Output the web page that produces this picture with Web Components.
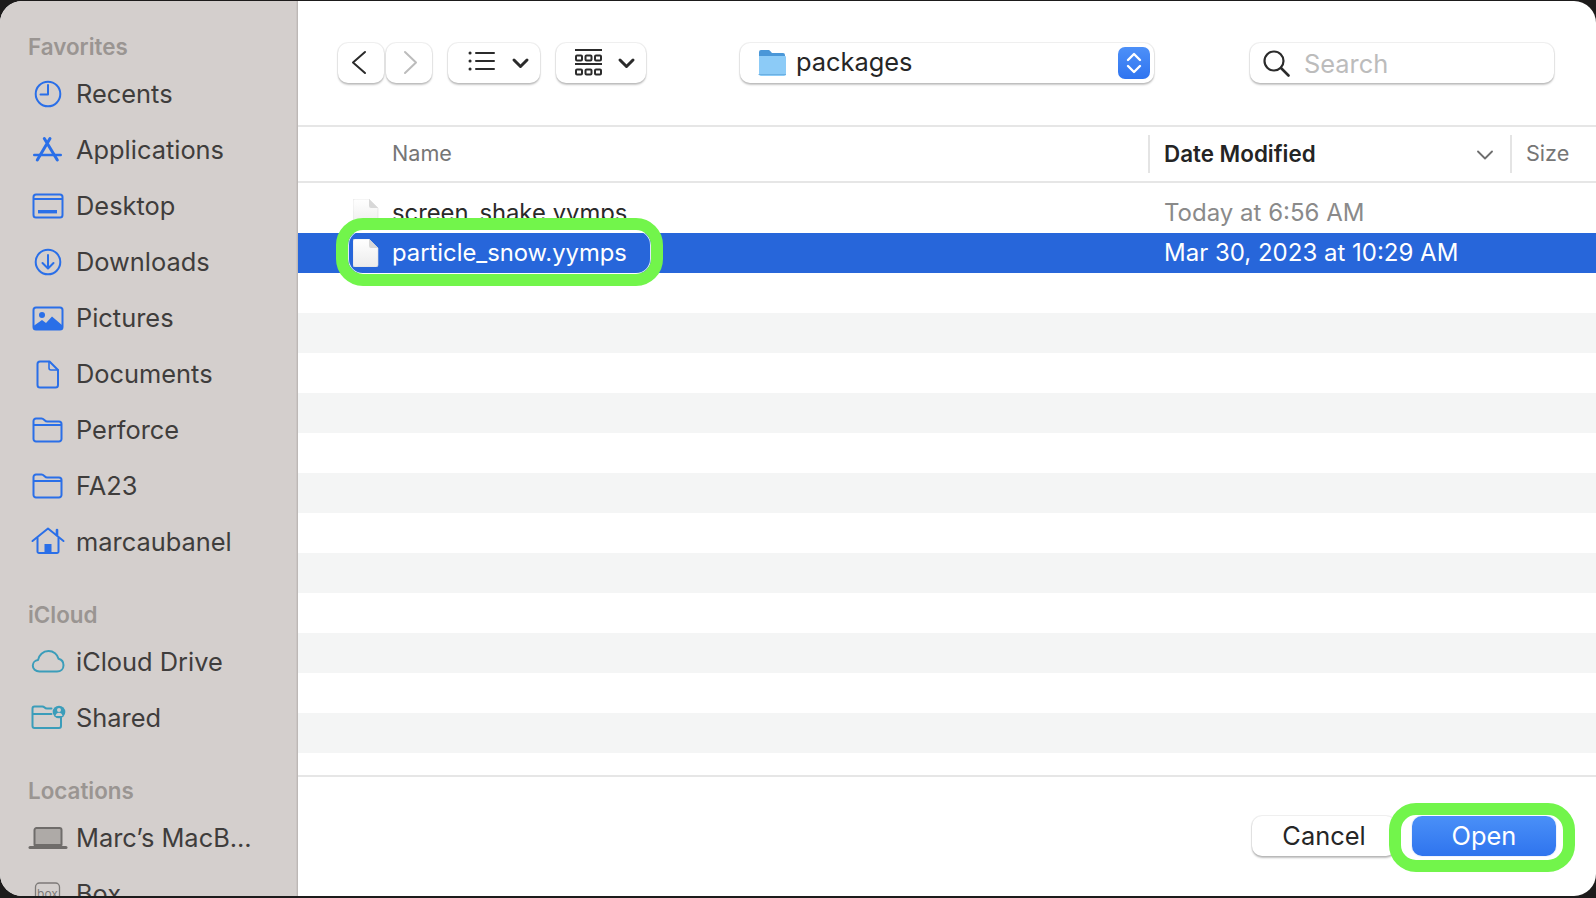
<!DOCTYPE html>
<html lang="en">
<head>
<meta charset="utf-8">
<title>Open</title>
<style>
  html, body { margin: 0; height: 100%; background: #1d1b1b; overflow: hidden; }
  body { font-family: Inter, "Liberation Sans", sans-serif; }
</style>
</head>
<body>
<file-dialog>
  <side-bar slot="side">
    <side-heading>Favorites</side-heading>
    <side-item icon="clock">Recents</side-item>
    <side-item icon="apps">Applications</side-item>
    <side-item icon="desktop">Desktop</side-item>
    <side-item icon="download">Downloads</side-item>
    <side-item icon="pictures">Pictures</side-item>
    <side-item icon="document">Documents</side-item>
    <side-item icon="folder">Perforce</side-item>
    <side-item icon="folder">FA23</side-item>
    <side-item icon="home">marcaubanel</side-item>
    <side-heading class="gap">iCloud</side-heading>
    <side-item icon="cloud">iCloud Drive</side-item>
    <side-item icon="shared">Shared</side-item>
    <side-heading class="gap">Locations</side-heading>
    <side-item icon="laptop">Marc’s MacB...</side-item>
    <side-item icon="box">Box</side-item>
  </side-bar>
  <tool-bar slot="main"></tool-bar>
  <list-header slot="main"></list-header>
  <file-list slot="main">
    <file-row date="Today at 6:56 AM">screen_shake.yymps</file-row>
    <file-row selected date="Mar 30, 2023 at 10:29 AM">particle_snow.yymps</file-row>
  </file-list>
  <dialog-footer slot="main">
    <action-button>Cancel</action-button>
    <action-button primary>Open</action-button>
  </dialog-footer>
  <highlight-ring slot="over" style="left:336px;top:218px;width:327px;height:68px"></highlight-ring>
  <highlight-ring slot="over" style="left:1389px;top:803px;width:186px;height:69px"></highlight-ring>
</file-dialog>

<script>
// sidebar icons, 34x34 box centred on the row
const ICONS = {
  clock: `<circle cx="17" cy="17" r="12.300"/><path d="M17 8v9.500H9.500"/>`,
  apps: `<path stroke-width="3" d="M13.300 5.500 26.300 27M19 5.500 6.300 27"/><path stroke-width="2.600" d="M3.300 22h26.400"/>`,
  desktop: `<rect x="2.500" y="5.500" width="29" height="23" rx="2.500"/><path d="M3 10h28"/><rect x="7" y="21" width="19" height="3.400" fill="currentColor" stroke="none"/>`,
  download: `<circle cx="17" cy="17" r="12.300"/><path d="M17 10v13M11.500 18l5.500 5.500 5.500-5.500"/>`,
  pictures: `<rect x="2.500" y="6.500" width="29" height="22" rx="2.500"/><circle cx="11" cy="14" r="3" fill="currentColor" stroke="none"/><path fill="currentColor" stroke="none" d="M2.500 25 11 19l4 3 6-6.500 10.500 9V26a2.500 2.500 0 0 1-2.500 2.500H5A2.500 2.500 0 0 1 2.500 26z"/>`,
  document: `<path d="M9 4.500h9.500L27 13v15a2.500 2.500 0 0 1-2.500 2.500H9A2.500 2.500 0 0 1 6.500 28V7A2.500 2.500 0 0 1 9 4.500z"/><path d="M18 4.500v6.500a2 2 0 0 0 2 2h7" stroke-width="1.600"/>`,
  folder: `<path d="M5 5.500h5.500c1.500 0 2 .6 3 1.600.8.800 1.300 1.400 2.700 1.400H28A2.500 2.500 0 0 1 30.500 11v15a2.500 2.500 0 0 1-2.500 2.500H5A2.500 2.500 0 0 1 2.500 26V8A2.500 2.500 0 0 1 5 5.500z"/><path d="M3 12h27"/>`,
  home: `<path d="M1.500 16 17 3.500 32.500 16"/><path d="M6.500 13v13.500A1.500 1.500 0 0 0 8 28h18a1.500 1.500 0 0 0 1.500-1.500V13"/><path d="M26 5v5" stroke-width="2.600"/><rect x="13.500" y="19" width="7" height="9" fill="currentColor" stroke="none"/>`,
  cloud: `<path d="M8.500 26.500C4.500 26.500 1.800 24 1.800 20.700c0-3 2.300-5.300 5.200-5.600C7.800 10 12 6 17.500 6c5 0 9 3.300 10 7.800 3 .8 5 3.300 5 6.400 0 3.600-2.700 6.300-6.500 6.300z"/>`,
  shared: `<path d="M20.500 7.500H16c-1.400 0-1.900-.5-2.700-1.300-1-1-1.500-.7-3-.7H3.500a2 2 0 0 0-2 2V25a2 2 0 0 0 2 2H28a2 2 0 0 0 2-2v-8"/><path d="M2 13h18.500"/><circle cx="28" cy="11" r="6.300" fill="currentColor" stroke="none"/><circle cx="28" cy="9" r="2" fill="#d4cfcd" stroke="none"/><path d="M24.500 15c.5-2.200 1.700-3.200 3.500-3.200s3 1 3.500 3.200z" fill="#d4cfcd" stroke="none"/>`,
  laptop: `<path d="M3.500 24V9a2 2 0 0 1 2-2h23a2 2 0 0 1 2 2v15z" fill="#aeaaa7" stroke="#6f6c6a"/><path d="M-1 26.500h36" stroke="#6f6c6a" stroke-width="3"/>`,
  box: `<rect x="4.500" y="6" width="24" height="26" rx="4" fill="none" stroke="#7d7a78" stroke-width="1.300"/><text x="16.500" y="21" text-anchor="middle" font-size="12" font-family="Inter, sans-serif" fill="#7d7a78" stroke="none">box</text>`
};

class FileDialog extends HTMLElement {
  constructor() {
    super();
    this.attachShadow({ mode: "open" });
    this.shadowRoot.innerHTML = `
      <style>
        :host { display: block; position: relative; height: 100vh; box-sizing: border-box; padding: 1px 0 2px; }
        .window {
          display: flex;
          height: 100%;
          background: #fff;
          border-radius: 22px;
          overflow: hidden;
        }
        .main { flex: 1; min-width: 0; display: flex; flex-direction: column; }
      </style>
      <div class="window">
        <slot name="side"></slot>
        <div class="main"><slot name="main"></slot></div>
      </div>
      <slot name="over"></slot>
    `;
  }
}

class SideBar extends HTMLElement {
  constructor() {
    super();
    this.attachShadow({ mode: "open" });
    this.shadowRoot.innerHTML = `
      <style>
        :host {
          display: block;
          flex: none;
          width: 298px;
          box-sizing: border-box;
          padding-top: 32px;
          background: #d4cfcd;
          border-right: 1px solid #bdb8b6;
          box-shadow: inset -1px 0 0 #cbc6c4;
          overflow: hidden;
        }
      </style>
      <slot></slot>
    `;
  }
}

class SideHeading extends HTMLElement {
  constructor() {
    super();
    this.attachShadow({ mode: "open" });
    this.shadowRoot.innerHTML = `
      <style>
        :host {
          display: block;
          height: 30px;
          line-height: 28px;
          margin-bottom: 3px;
          padding-left: 28px;
          font-size: 22.400px;
          font-weight: 600;
          color: #9a9592;
        }
        :host(.gap) { margin-top: 31px; }
      </style>
      <slot></slot>
    `;
  }
}

class SideItem extends HTMLElement {
  constructor() {
    super();
    this.attachShadow({ mode: "open" });
  }

  connectedCallback() {
    const name = this.getAttribute("icon");
    const teal = name === "cloud" || name === "shared";
    const grey = name === "laptop" || name === "box";
    const color = teal ? "#3b9dba" : grey ? "#6f6c6a" : "#2a6fe8";
    this.shadowRoot.innerHTML = `
      <style>
        :host {
          display: flex;
          align-items: center;
          gap: 11px;
          height: 56px;
          padding-left: 31px;
          font-size: 25.400px;
          color: #3f3d3c;
          white-space: nowrap;
        }
        svg { flex: none; width: 34px; height: 34px; overflow: visible; color: ${color}; }
        span { padding-bottom: 2px; }
      </style>
      <svg viewBox="0 0 34 34" fill="none" stroke="currentColor" stroke-width="2" stroke-linecap="round" stroke-linejoin="round">${ICONS[name]}</svg>
      <span><slot></slot></span>
    `;
  }
}

class ToolButton extends HTMLElement {
  constructor() {
    super();
    this.attachShadow({ mode: "open" });
    this.shadowRoot.innerHTML = `
      <style>
        :host {
          display: flex;
          align-items: center;
          justify-content: center;
          flex: none;
          height: 40px;
          box-sizing: border-box;
          background: #fff;
          border-radius: 10px;
          box-shadow: 0 0 0 1px rgba(0,0,0,0.05), 0 1.500px 2px rgba(0,0,0,0.22);
        }
        ::slotted(svg) { display: block; }
      </style>
      <slot></slot>
    `;
  }
}

class ToolBar extends HTMLElement {
  constructor() {
    super();
    this.attachShadow({ mode: "open" });
    this.shadowRoot.innerHTML = `
      <style>
        :host {
          display: flex;
          align-items: flex-start;
          flex: none;
          height: 126px;
          box-sizing: border-box;
          padding: 42px 42px 0 40px;
          border-bottom: 2px solid #e6e6e6;
        }
        .nav { display: flex; gap: 2px; }
        .views { display: flex; gap: 16px; margin-left: 16px; }
        .path { margin-left: 94px; width: 414px; }
        .search { margin-left: 96px; width: 304px; }
        tool-button svg { stroke: #2b2b2b; fill: none; stroke-linecap: round; stroke-linejoin: round; }
        .path-in {
          display: flex; align-items: center; width: 100%; box-sizing: border-box;
          padding: 0 4px 0 18px; font-size: 25.400px; color: #262626;
        }
        .path-in span { margin-left: 10px; flex: 1; padding-bottom: 4px; }
        .stepper {
          width: 32px; height: 32px; border-radius: 7px;
          background: linear-gradient(#4d90f8, #2f74f0);
          display: flex; align-items: center; justify-content: center;
        }
        .search-in {
          display: flex; align-items: center; width: 100%; box-sizing: border-box;
          padding: 0 0 0 12px; font-size: 25.400px; color: #bcbcbc;
        }
        .search-in span { margin-left: 14px; }
      </style>
      <div class="nav">
        <tool-button style="width:46px">
          <svg width="46" height="40" viewBox="0 0 46 40" stroke-width="2"><path d="M27 9 15 19.500 27 30" style="stroke:#2b2b2b"/></svg>
        </tool-button>
        <tool-button style="width:46px">
          <svg width="46" height="40" viewBox="0 0 46 40" stroke-width="2"><path d="M19 9 30 19.500 19 30" style="stroke:#bcbcbc"/></svg>
        </tool-button>
      </div>
      <div class="views">
        <tool-button style="width:92px">
          <svg width="92" height="40" viewBox="0 0 92 40" stroke-width="2">
            <path d="M22 10h.1M22 18h.1M22 26h.1" stroke-width="3"/>
            <path d="M28 10h18M28 18h18M28 26h18"/>
            <path d="M66 17l6.500 6.500L79 17" stroke-width="3"/>
          </svg>
        </tool-button>
        <tool-button style="width:90px">
          <svg width="90" height="40" viewBox="0 0 90 40" stroke-width="2">
            <path d="M19 7h27M19 21h27" stroke-linecap="butt"/>
            <rect x="20" y="12.500" width="6" height="5" rx="1"/><rect x="29.500" y="12.500" width="6" height="5" rx="1"/><rect x="39" y="12.500" width="6" height="5" rx="1"/>
            <rect x="20" y="26.500" width="6" height="5" rx="1"/><rect x="29.500" y="26.500" width="6" height="5" rx="1"/><rect x="39" y="26.500" width="6" height="5" rx="1"/>
            <path d="M64 17l6.500 6.500L77 17" stroke-width="3"/>
          </svg>
        </tool-button>
      </div>
      <tool-button class="path">
        <div class="path-in">
          <svg width="28" height="28" viewBox="0 0 28 28" style="stroke:none">
            <path d="M1 3a2 2 0 0 1 2-2h7c1.500 0 2 .6 3 2 .4.500 1 1 2 1h10a2 2 0 0 1 2 2v4H1z" style="fill:#4a97d8;stroke:none"/>
            <path d="M1 7h26a1 1 0 0 1 1 1v17a2 2 0 0 1-2 2H3a2 2 0 0 1-2-2z" style="fill:#8ccbf7;stroke:none"/>
            <path d="M1 25.500h27" style="stroke:#6cb0e2;stroke-width:1"/>
          </svg>
          <span>packages</span>
          <div class="stepper">
            <svg width="20" height="26" viewBox="0 0 20 26" stroke-width="2.400"><path d="M4 10l6-6 6 6M4 16l6 6 6-6" style="stroke:#fff"/></svg>
          </div>
        </div>
      </tool-button>
      <tool-button class="search">
        <div class="search-in">
          <svg width="28" height="28" viewBox="0 0 28 28" stroke-width="2.200"><circle cx="12" cy="12" r="9.500"/><path d="M19 19l7.500 7.500" stroke-width="2.600"/></svg>
          <span>Search</span>
        </div>
      </tool-button>
    `;
  }
}

const COLUMNS = "850px 362px 1fr";

class ListHeader extends HTMLElement {
  constructor() {
    super();
    this.attachShadow({ mode: "open" });
    this.shadowRoot.innerHTML = `
      <style>
        :host {
          display: grid;
          grid-template-columns: ${COLUMNS};
          flex: none;
          height: 56px;
          box-sizing: border-box;
          border-bottom: 2px solid #e6e6e6;
          align-items: center;
          font-size: 21.600px;
          color: #767676;
        }
        .name { padding-left: 94px; padding-bottom: 2px; }
        .date {
          display: flex; align-items: center; justify-content: space-between;
          height: 38px; box-sizing: border-box;
          padding: 0 17px 2px 14px;
          border-left: 2px solid #e4e4e4;
          font-size: 22.400px;
          font-weight: 600; color: #242424;
        }
        .date svg { margin-top: 4px; }
        .size {
          display: flex; align-items: center; height: 38px; box-sizing: border-box;
          padding: 0 0 2px 14px; border-left: 2px solid #e4e4e4;
        }
      </style>
      <div class="name">Name</div>
      <div class="date">Date Modified
        <svg width="16" height="10" viewBox="0 0 16 10" fill="none" stroke="#6e6e6e" stroke-width="1.800" stroke-linecap="round" stroke-linejoin="round"><path d="M1 1.500l7 7 7-7"/></svg>
      </div>
      <div class="size">Size</div>
    `;
  }
}

class FileList extends HTMLElement {
  constructor() {
    super();
    this.attachShadow({ mode: "open" });
    this.shadowRoot.innerHTML = `
      <style>
        :host {
          display: block;
          flex: 1;
          min-height: 0;
          padding-top: 10px;
          overflow: hidden;
          border-bottom: 2px solid #e6e6e6;
          background:
            repeating-linear-gradient(#fff 0 40px, #f4f5f5 40px 80px) 0 90px no-repeat;
        }
      </style>
      <slot></slot>
    `;
  }
}

class FileRow extends HTMLElement {
  constructor() {
    super();
    this.attachShadow({ mode: "open" });
  }

  connectedCallback() {
    this.shadowRoot.innerHTML = `
      <style>
        :host {
          display: grid;
          grid-template-columns: ${COLUMNS};
          align-items: center;
          height: 40px;
          font-size: 24px;
          color: #2a2a2a;
          white-space: nowrap;
        }
        :host([selected]) { background: #2766da; color: #fff; }
        .name { display: flex; align-items: center; gap: 13px; padding-left: 55px; font-size: 23.800px; }
        .name svg { flex: none; }
        .name span { padding-bottom: 2px; }
        .date { padding: 0 0 2px 16px; color: #8a8a8a; }
        :host([selected]) .date { color: #fff; }
      </style>
      <div class="name">
        <svg width="26" height="28" viewBox="0 0 26 28">
          <defs><linearGradient id="pg" x1="0" y1="0" x2="0" y2="1"><stop offset="0" stop-color="#fff"/><stop offset="1" stop-color="#ececec"/></linearGradient></defs>
          <path d="M2 0h14l9 9v17a2 2 0 0 1-2 2H2a2 2 0 0 1-2-2V2a2 2 0 0 1 2-2z" fill="url(#pg)" stroke="#dcdcdc" stroke-width=".6"/>
          <path d="M16 0v7a2 2 0 0 0 2 2h7z" fill="#d8d8d8"/>
        </svg>
        <span><slot></slot></span>
      </div>
      <div class="date">${this.getAttribute("date")}</div>
      <div></div>
    `;
  }
}

class DialogFooter extends HTMLElement {
  constructor() {
    super();
    this.attachShadow({ mode: "open" });
    this.shadowRoot.innerHTML = `
      <style>
        :host {
          display: flex;
          justify-content: flex-end;
          align-items: flex-start;
          gap: 16px;
          flex: none;
          height: 119px;
          box-sizing: border-box;
          padding: 39px 40px 0 0;
        }
      </style>
      <slot></slot>
    `;
  }
}

class ActionButton extends HTMLElement {
  constructor() {
    super();
    this.attachShadow({ mode: "open" });
    this.shadowRoot.innerHTML = `
      <style>
        :host {
          display: flex;
          align-items: center;
          justify-content: center;
          width: 144px;
          height: 40px;
          box-sizing: border-box;
          padding-bottom: 2px;
          border-radius: 10px;
          background: #fff;
          color: #262626;
          font-size: 25.400px;
          box-shadow: 0 0 0 1px rgba(0,0,0,0.05), 0 1.500px 2px rgba(0,0,0,0.25);
        }
        :host([primary]) {
          background: linear-gradient(#4a90f8, #2f74ee);
          color: #fff;
          box-shadow: 0 0 0 1px rgba(60,110,230,0.08);
        }
      </style>
      <slot></slot>
    `;
  }
}

// green annotation drawn over the screenshot
class HighlightRing extends HTMLElement {
  constructor() {
    super();
    this.attachShadow({ mode: "open" });
    this.shadowRoot.innerHTML = `
      <style>
        :host {
          display: block;
          position: absolute;
          box-sizing: border-box;
          border: 12px solid #72f54b;
          border-radius: 27px;
          box-shadow: inset 0 0 0 1px rgba(255,255,255,0.85);
        }
      </style>
    `;
  }
}

customElements.define("file-dialog", FileDialog);
customElements.define("side-bar", SideBar);
customElements.define("side-heading", SideHeading);
customElements.define("side-item", SideItem);
customElements.define("tool-button", ToolButton);
customElements.define("tool-bar", ToolBar);
customElements.define("list-header", ListHeader);
customElements.define("file-list", FileList);
customElements.define("file-row", FileRow);
customElements.define("dialog-footer", DialogFooter);
customElements.define("action-button", ActionButton);
customElements.define("highlight-ring", HighlightRing);
</script>
</body>
</html>
